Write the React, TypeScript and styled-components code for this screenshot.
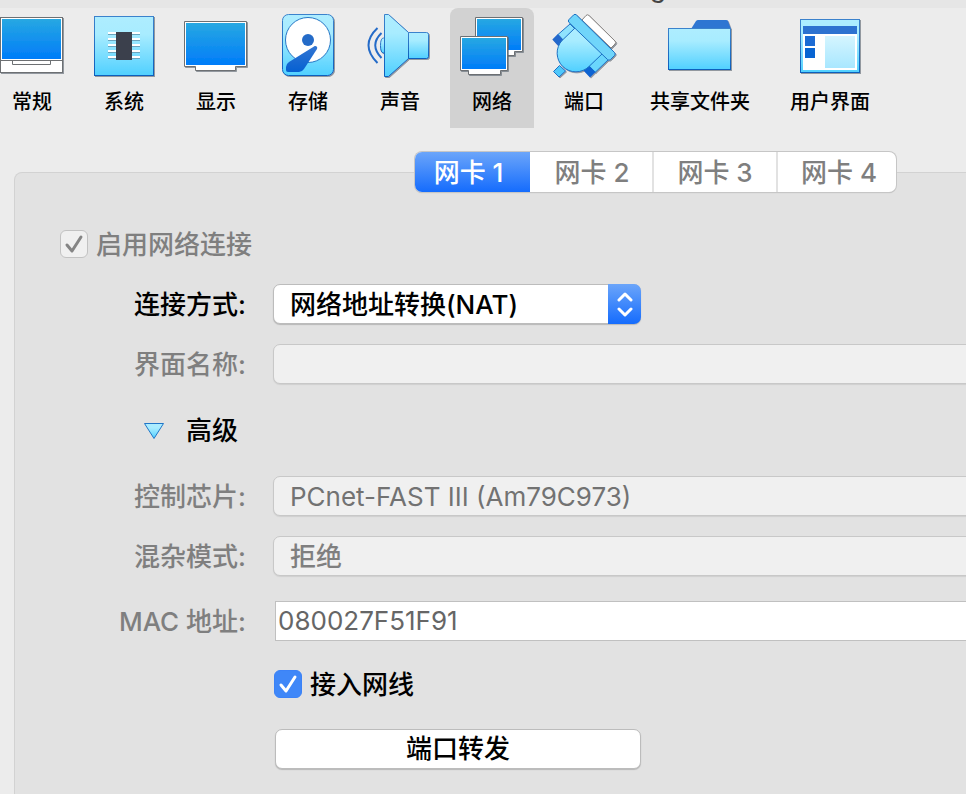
import React from "react";
import styled, { createGlobalStyle, css } from "styled-components";

const GlobalStyle = createGlobalStyle`
  * { box-sizing: border-box; }
  body {
    margin: 0;
    background: #ececec;
    color: #000;
    font-family: Inter, "Noto Sans CJK SC", sans-serif;
    font-size: 26px;
    line-height: 40px;
  }
  button, input, select {
    margin: 0;
    padding: 0;
    border: 0;
    font: inherit;
    color: inherit;
  }
`;

const Page = styled.main`
  display: flex;
  flex-direction: column;
  min-height: 100vh;
  overflow: hidden;
`;

const TitleBar = styled.header`
  display: flex;
  align-items: flex-end;
  justify-content: center;
  height: 8px;
  padding-left: 350px;
  background: #e6e6e6;
  color: #444;
  overflow: hidden;
`;

const Title = styled.span`
  line-height: 40px;
`;

const Toolbar = styled.nav`
  display: flex;
  gap: 8px;
  margin-left: -10px;
`;

const ToolButton = styled.button<{ $active?: boolean }>`
  display: flex;
  flex: none;
  flex-direction: column;
  align-items: center;
  gap: 8px;
  min-width: 84px;
  height: 120px;
  padding: 4px 16px 0;
  border-radius: 8px 8px 0 0;
  background: ${(p) => (p.$active ? "#d2d2d2" : "transparent")};
  font-size: 20px;
  font-weight: 500;
  line-height: 28px;
  white-space: nowrap;

  svg {
    display: block;
    width: 68px;
    height: 68px;
    margin: 0 -8px;
    flex: none;
  }
`;

const Panel = styled.section`
  flex: 1;
  margin: 44px -20px 0 14px;
  padding-bottom: 24px;
  border: 1px solid #d2d2d2;
  border-bottom: 0;
  border-radius: 8px 8px 0 0;
  background: #e2e2e2;
`;

const Tabs = styled.div`
  display: flex;
  width: fit-content;
  margin: -21px 0 32px 400px;
  border-radius: 7px;
  background: #fff;
  box-shadow: 0 0 0 1px #c6c6c6, 0 1px 1px #b4b4b4;
`;

const Tab = styled.button<{ $active?: boolean }>`
  width: 124px;
  height: 40px;
  padding-top: 2px;
  border-left: 2px solid #e2e2e2;
  background: transparent;
  color: #7f7f7f;
  font-weight: 500;
  line-height: 38px;

  &:nth-child(2) {
    width: 122px;
    border-left-color: transparent;
  }
  &:last-child {
    width: 120px;
    padding-left: 4px;
  }

  ${(p) =>
    p.$active &&
    css`
      width: 115px;
      padding-right: 8px;
      border-left: 0;
      border-radius: 7px 0 0 7px;
      background: linear-gradient(#6ba5fa, #156cfd);
      color: #fff;
    `}
`;

const CheckLabel = styled.label<{ $disabled?: boolean }>`
  display: inline-flex;
  align-items: center;
  gap: 8px;
  height: 40px;
  font-weight: 500;
  color: ${(p) => (p.$disabled ? "#7f7f7f" : "#000")};
`;

const CheckText = styled.span`
  padding-top: 2px;
`;

const EnableRow = styled.div`
  display: flex;
  padding-left: 45px;
`;

const CheckBox = styled.span`
  display: grid;
  width: 28px;
  height: 28px;

  > * { grid-area: 1 / 1; }
  svg { pointer-events: none; }
`;

const CheckInput = styled.input`
  appearance: none;
  width: 28px;
  height: 28px;
  border: 1px solid #3b82f7;
  border-radius: 6px;
  background: #3f87f8;

  &:disabled {
    border-color: #c2c2c2;
    background: #f0f0f0;
  }
`;

const FormRow = styled.div<{ $space: number }>`
  display: grid;
  grid-template-columns: 231px minmax(0, 1fr);
  column-gap: 28px;
  margin-top: ${(p) => p.$space}px;
`;

const FieldLabel = styled.label<{ $disabled?: boolean }>`
  height: 40px;
  padding-top: 1px;
  text-align: right;
  font-weight: 500;
  color: ${(p) => (p.$disabled ? "#7f7f7f" : "#000")};
`;

const FieldArea = styled.div`
  grid-column: 2;
  display: flex;
`;

const fieldFrame = css`
  width: 100%;
  height: 40px;
  border: 1px solid #c8c8c8;
  border-radius: 7px;
`;

const SelectFrame = styled.div`
  display: grid;
  width: 368px;
  margin-left: -1px;

  > * { grid-area: 1 / 1; }
`;

const Select = styled.select`
  ${fieldFrame}
  appearance: none;
  padding: 0 40px 4px 16px;
  background: #fff;
  border-color: #bcbcbc;
  box-shadow: 0 1px 1px #b8b8b8;
  font-weight: 500;
`;

const Stepper = styled.span`
  display: flex;
  align-items: center;
  justify-content: center;
  justify-self: end;
  width: 33px;
  height: 40px;
  border-radius: 0 7px 7px 0;
  background: linear-gradient(#6ba5fa, #156cfd);
  pointer-events: none;
`;

const DisabledSelect = styled.select<{ $medium?: boolean }>`
  ${fieldFrame}
  appearance: none;
  margin-left: -1px;
  padding: 0 16px 4px;
  background: #f0f0f0;
  box-shadow: 0 1px 1px #d0d0d0;
  font-weight: ${(p) => (p.$medium ? 500 : 400)};

  &:disabled { color: ${(p) => (p.$medium ? "#7f7f7f" : "#727272")}; opacity: 1; }
`;

const TextInput = styled.input`
  ${fieldFrame}
  margin-left: 1px;
  padding: 0 2px;
  border-color: #c0c0c0;
  border-radius: 0;
  background: #fff;
  color: #666;
`;

const Disclosure = styled.button`
  grid-column: 1 / -1;
  justify-self: start;
  display: flex;
  align-items: center;
  gap: 21px;
  height: 40px;
  margin-left: 128px;
  padding-top: 2px;
  background: transparent;
  font-weight: 500;
`;

const PushButton = styled.button`
  width: 366px;
  height: 40px;
  margin-left: 1px;
  border: 1px solid #bcbcbc;
  border-radius: 7px;
  background: #fff;
  box-shadow: 0 1px 1px #b8b8b8;
  font-weight: 500;
  line-height: 36px;
`;

const Defs = styled.svg`
  position: absolute;
  width: 0;
  height: 0;
`;

function Gradients() {
  return (
    <Defs aria-hidden="true">
      <defs>
        <linearGradient id="screen" x1="0" y1="0" x2="0" y2="1">
          <stop offset="0" stopColor="#27a8e2" />
          <stop offset="1" stopColor="#007cf9" />
        </linearGradient>
        <linearGradient id="ice" x1="0" y1="0" x2="0" y2="1">
          <stop offset="0" stopColor="#aeedff" />
          <stop offset="0.3" stopColor="#a8ecff" />
          <stop offset="1" stopColor="#50d0ff" />
        </linearGradient>
        <linearGradient id="edge" x1="0" y1="0" x2="0" y2="1">
          <stop offset="0" stopColor="#3b82cc" />
          <stop offset="1" stopColor="#0c5fbd" />
        </linearGradient>
        <linearGradient id="deep" x1="0" y1="0" x2="0" y2="1">
          <stop offset="0" stopColor="#3275d2" />
          <stop offset="1" stopColor="#0560d2" />
        </linearGradient>
        <linearGradient id="pale" x1="0" y1="0" x2="0" y2="1">
          <stop offset="0" stopColor="#d5f5ff" />
          <stop offset="1" stopColor="#a8e7ff" />
        </linearGradient>
        <filter id="drop" x="-10%" y="-10%" width="125%" height="125%">
          <feDropShadow dx="1" dy="1" stdDeviation="0.3" floodColor="#55606c" floodOpacity="0.6" />
        </filter>
      </defs>
    </Defs>
  );
}

const GeneralIcon = () => (
  <svg viewBox="0 0 68 68">
    <g filter="url(#drop)">
      <rect x="2.5" y="5.5" width="62" height="55" fill="#fff" stroke="#6d7073" />
      <path d="M2.5 48.5h62M14.5 48.5v4h38v-4" fill="none" stroke="#6d7073" />
      <rect x="4" y="7" width="59" height="40" fill="url(#screen)" />
    </g>
  </svg>
);

const SystemIcon = () => (
  <svg viewBox="0 0 68 68">
    <rect x="4.5" y="4.5" width="59" height="59" fill="url(#ice)" stroke="url(#edge)" filter="url(#drop)" />
    {[20, 26, 32, 38, 44].map((y) => (
      <g key={y}>
        <rect x="18" y={y} width="32" height="2" fill="#fff" />
        <rect x="18" y={y + 2} width="32" height="1" fill="#6ba5be" />
      </g>
    ))}
    <rect x="26" y="20" width="16" height="28" fill="#3b404c" />
  </svg>
);

const DisplayIcon = () => (
  <svg viewBox="0 0 68 68">
    <g filter="url(#drop)">
      <path d="M2.5 9.5h62v45h-11v4h-40v-4h-11z" fill="#fff" stroke="#6d7073" />
      <rect x="4" y="11" width="59" height="42" fill="url(#screen)" />
    </g>
  </svg>
);

const StorageIcon = () => (
  <svg viewBox="0 0 68 68">
    <rect x="8.5" y="2.5" width="51" height="61" rx="6" fill="url(#ice)" stroke="url(#edge)" filter="url(#drop)" />
    <circle cx="34" cy="28" r="22.5" fill="#fff" stroke="#2878c6" />
    <circle cx="34" cy="28" r="6" fill="#246bc8" />
    <path d="M40 34.5c2-1.2 4 .6 3 2.6L30 57q-2 3-5 3H14q-2 0-2-2v-3q0-3 3-5z" fill="url(#deep)" />
  </svg>
);

const SoundIcon = () => (
  <svg viewBox="0 0 68 68">
    <g fill="none" stroke="#246bc8" strokeWidth="2">
      <path d="M11.5 16Q-6.5 33 11.5 51" />
      <path d="M15.5 21Q3 33 15.5 46" />
    </g>
    <g fill="url(#ice)" stroke="url(#edge)" filter="url(#drop)">
      <path d="M18.5 26h-1q-3 0-3 7.5t3 7.5h1z" />
      <path d="M18.5 2.5h4l20 18v26l-20 18h-4z" />
      <path d="M42.5 20.5h18q2 0 2 2v22q0 2-2 2h-18z" />
    </g>
  </svg>
);

const NetworkIcon = () => (
  <svg viewBox="0 0 68 68">
    <g filter="url(#drop)">
      <path d="M17.5 5.5h47v34h-8v4h-30v-4h-9z" fill="#fff" stroke="#6d7073" />
      <rect x="19" y="7" width="44" height="31" fill="url(#screen)" />
    </g>
    <g filter="url(#drop)">
      <path d="M2.5 24.5h47v34h-7v4h-32v-4h-8z" fill="#fff" stroke="#6d7073" />
      <rect x="4" y="26" width="44" height="31" fill="url(#screen)" />
    </g>
  </svg>
);

const PortsIcon = () => (
  <svg viewBox="0 0 68 68">
    <g filter="url(#drop)" strokeLinejoin="round">
      <path d="M32 8l4-4.5q1.5-1.5 3 0L65 29q1.5 1.5 0 3l-4 4z" fill="#fff" stroke="#85817e" />
      <path d="M20 12l6 6-12.5 10.5L8 22.5z" fill="#8fe2fd" stroke="#1c70c4" />
      <path d="M2.3 27.5l5.5-5.500 6 6.500-5.500 5.500z" fill="#2468cc" />
      <path d="M52 41l6.5 6.5L45 60.5 39 54z" fill="#6ad6fc" stroke="#1c70c4" />
      <path d="M33.5 58.5l5.5-5 6.5 6.5-5.500 5.500z" fill="#0864d2" />
      <path d="M3.5 59.5l6-6 6 5.5-6.500 6z" fill="#50c8fa" stroke="#1c70c4" />
      <path d="M25.5 15.5L52.5 41.5 39 54.5A18.75 18.75 0 0 1 12 28.5z" fill="url(#ice)" stroke="#1c70c4" />
      <path d="M19 7.5l4.5-4.500q1.500-1.500 3 0L64.5 40.5q1.5 1.5 0 3L60.5 47.5q-1.500 1.500-3 0L19 10.5q-1.500-1.500 0-3z" fill="#70d5fa" stroke="#1c70c4" />
    </g>
  </svg>
);

const FolderIcon = () => (
  <svg viewBox="0 0 68 68">
    <g filter="url(#drop)">
      <path d="M25 17l5-8q1-1 2-1h28q2 0 2 1l3 8z" fill="#2f76d2" />
      <rect x="2.5" y="16.5" width="62" height="41" fill="url(#ice)" stroke="url(#edge)" />
    </g>
  </svg>
);

const InterfaceIcon = () => (
  <svg viewBox="0 0 68 68">
    <rect x="4.5" y="7.5" width="59" height="53" fill="url(#ice)" stroke="url(#edge)" filter="url(#drop)" />
    <rect x="7" y="14" width="54" height="44" fill="#fff" />
    <rect x="7" y="14" width="54" height="8" fill="#2d72d0" />
    <rect x="9" y="24" width="10" height="10" fill="#1c6bd4" />
    <rect x="9" y="36" width="10" height="10" fill="#0864d2" />
    <rect x="29" y="24" width="30" height="32" fill="url(#pale)" />
  </svg>
);

const tools = [
  { name: "常规", Icon: GeneralIcon },
  { name: "系统", Icon: SystemIcon },
  { name: "显示", Icon: DisplayIcon },
  { name: "存储", Icon: StorageIcon },
  { name: "声音", Icon: SoundIcon },
  { name: "网络", Icon: NetworkIcon },
  { name: "端口", Icon: PortsIcon },
  { name: "共享文件夹", Icon: FolderIcon },
  { name: "用户界面", Icon: InterfaceIcon },
];

const adapters = ["网卡 1", "网卡 2", "网卡 3", "网卡 4"];

function Check({ label, disabled }: { label: string; disabled?: boolean }) {
  return (
    <CheckLabel $disabled={disabled}>
      <CheckBox>
        <CheckInput type="checkbox" defaultChecked disabled={disabled} />
        <svg viewBox="0 0 28 28">
          <path
            d="M7 15l5 6 9-14"
            fill="none"
            stroke={disabled ? "#858585" : "#fff"}
            strokeWidth="3"
            strokeLinecap="round"
            strokeLinejoin="round"
          />
        </svg>
      </CheckBox>
      <CheckText>{label}</CheckText>
    </CheckLabel>
  );
}

export default function App() {
  const [tool, setTool] = React.useState("网络");
  const [adapter, setAdapter] = React.useState("网卡 1");

  return (
    <>
      <GlobalStyle />
      <Gradients />
      <Page>
        <TitleBar>
          <Title>g</Title>
        </TitleBar>
        <Toolbar>
          {tools.map(({ name, Icon }) => (
            <ToolButton key={name} type="button" $active={tool === name} onClick={() => setTool(name)}>
              <Icon />
              {name}
            </ToolButton>
          ))}
        </Toolbar>
        <Panel>
          <Tabs role="tablist">
            {adapters.map((name) => (
              <Tab
                key={name}
                type="button"
                role="tab"
                aria-selected={adapter === name}
                $active={adapter === name}
                onClick={() => setAdapter(name)}
              >
                {name}
              </Tab>
            ))}
          </Tabs>
          <EnableRow>
            <Check label="启用网络连接" disabled />
          </EnableRow>
          <FormRow $space={20}>
            <FieldLabel htmlFor="attachment">连接方式:</FieldLabel>
            <SelectFrame>
              <Select id="attachment">
                <option>网络地址转换(NAT)</option>
              </Select>
              <Stepper>
                <svg width="16" height="26" viewBox="0 0 16 26" fill="none" stroke="#fff" strokeWidth="3" strokeLinecap="round" strokeLinejoin="round">
                  <path d="M2 9l6-6 6 6M2 18l6 6 6-6" />
                </svg>
              </Stepper>
            </SelectFrame>
          </FormRow>
          <FormRow $space={20}>
            <FieldLabel htmlFor="interface" $disabled>界面名称:</FieldLabel>
            <FieldArea>
              <DisabledSelect id="interface" disabled />
            </FieldArea>
          </FormRow>
          <FormRow $space={26}>
            <Disclosure type="button" aria-expanded="true">
              <svg width="22" height="18" viewBox="0 0 22 18">
                <path d="M1.5 1.5h19L11 16.5z" fill="url(#ice)" stroke="#2076c8" strokeLinejoin="round" />
              </svg>
              高级
            </Disclosure>
          </FormRow>
          <FormRow $space={26}>
            <FieldLabel htmlFor="chip" $disabled>控制芯片:</FieldLabel>
            <FieldArea>
              <DisabledSelect id="chip" disabled>
                <option>PCnet-FAST III (Am79C973)</option>
              </DisabledSelect>
            </FieldArea>
          </FormRow>
          <FormRow $space={20}>
            <FieldLabel htmlFor="mode" $disabled>混杂模式:</FieldLabel>
            <FieldArea>
              <DisabledSelect id="mode" $medium disabled>
                <option>拒绝</option>
              </DisabledSelect>
            </FieldArea>
          </FormRow>
          <FormRow $space={25}>
            <FieldLabel htmlFor="mac" $disabled>MAC 地址:</FieldLabel>
            <FieldArea>
              <TextInput id="mac" defaultValue="080027F51F91" readOnly />
            </FieldArea>
          </FormRow>
          <FormRow $space={23}>
            <FieldArea>
              <Check label="接入网线" />
            </FieldArea>
          </FormRow>
          <FormRow $space={25}>
            <FieldArea>
              <PushButton type="button">端口转发</PushButton>
            </FieldArea>
          </FormRow>
        </Panel>
      </Page>
    </>
  );
}
